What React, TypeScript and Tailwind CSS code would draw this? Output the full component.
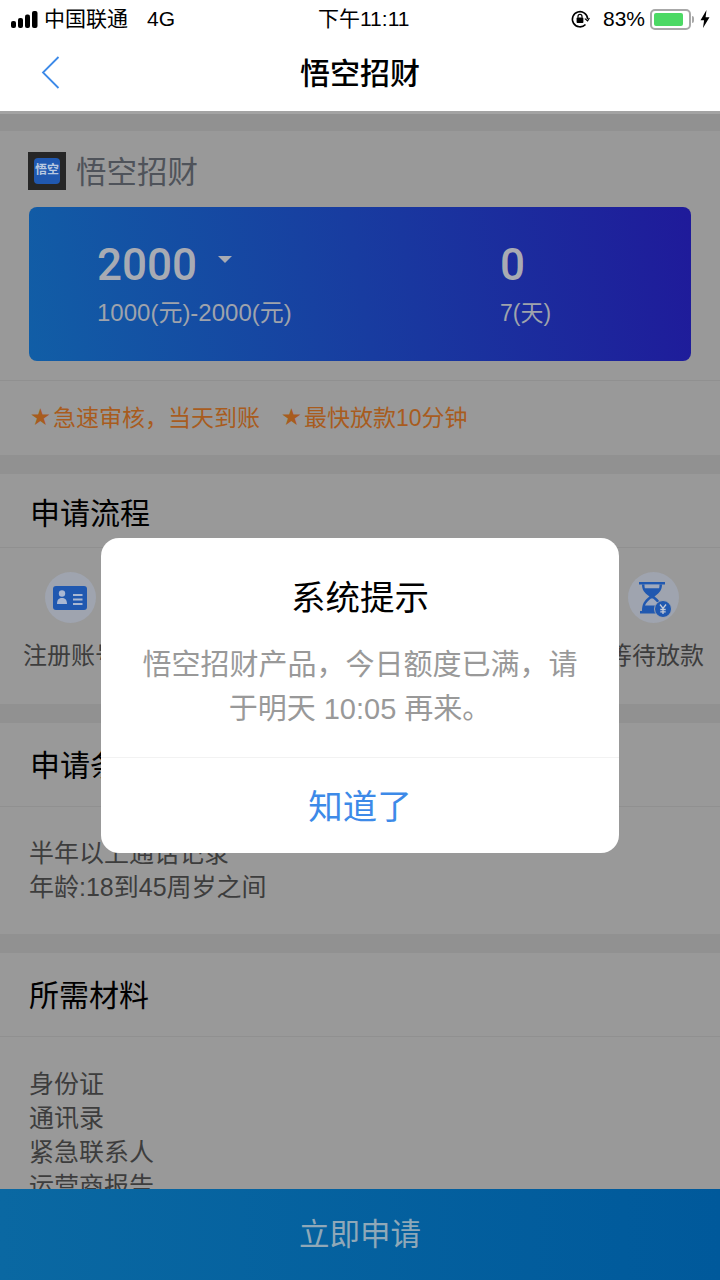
import React from 'react';

const font = { fontFamily: '"Liberation Sans", "Noto Sans CJK SC", sans-serif' };

const StatusBar: React.FC = () => (
  <div className="h-[38px] flex items-center justify-between pl-[11px] pr-[10px] text-black text-[20px] relative">
    <div className="flex items-center">
      <svg width="27" height="17" viewBox="0 0 27 17" fill="#000">
        <rect x="0" y="10" width="5" height="7" rx="2" />
        <rect x="7" y="7" width="5" height="10" rx="2" />
        <rect x="14" y="3.5" width="5" height="13.5" rx="2" />
        <rect x="21" y="0" width="5.5" height="17" rx="2" />
      </svg>
      <span className="ml-[6px] text-[21px]">中国联通</span>
      <span className="ml-[19px] text-[21px]">4G</span>
    </div>
    <div className="absolute left-[318px] top-[7px] text-[21px] leading-[24px]">下午11:11</div>
    <div className="flex items-center">
      <svg width="20" height="20" viewBox="0 0 20 20" fill="none" stroke="#000" strokeWidth="1.6">
        <path d="M15.5 15.5A7.6 7.6 0 1 1 17.6 10" />
        <path d="M14.8 9.6l2.8 2.2 1.8-2.8" strokeWidth="1.2" />
        <rect x="6.6" y="8.6" width="6.8" height="5.4" rx="0.8" fill="#000" stroke="none" />
        <path d="M8 8.8V7.4a2 2 0 0 1 4 0v1.4" strokeWidth="1.2" />
      </svg>
      <span className="ml-[13px] text-[21px]">83%</span>
      <div className="ml-[5px] w-[41px] h-[21px] rounded-[5px] border-2 border-[#a8a8a8] p-[2px]">
        <div className="h-full w-[29px] rounded-[2px] bg-[#4cd964]" />
      </div>
      <div className="ml-[1px] w-[2px] h-[7px] bg-[#a8a8a8] rounded-r-sm" />
      <svg className="ml-[6px]" width="10" height="18" viewBox="0 0 10 18" fill="#000">
        <path d="M6.5 0L0.5 10.2h3.6L3 18l6.5-10.8H5.6z" />
      </svg>
    </div>
  </div>
);

const SectionTitle: React.FC<{ title: string; className: string }> = ({ title, className }) => (
  <div className={`flex items-center border-b border-[#909090] text-[30px] text-black ${className}`}>{title}</div>
);

const CardIcon: React.FC = () => (
  <div className="w-[51px] h-[51px] mr-[2px] rounded-full bg-[#9fa4af] flex items-center justify-center">
    <svg width="34" height="24" viewBox="0 0 34 24">
      <rect width="34" height="24" rx="3" fill="#2058b0" />
      <circle cx="9" cy="7.500" r="3.200" fill="#a9b7d2" />
      <path d="M4 18c0-4.500 2.200-6 5-6s5 1.500 5 6z" fill="#a9b7d2" />
      <path d="M20 9h9.500M20 13.500h9.500M20 18h9.500" stroke="#a9b7d2" strokeWidth="1.800" />
    </svg>
  </div>
);

const HourglassIcon: React.FC = () => (
  <svg className="mr-[6px]" width="51" height="51" viewBox="0 0 51 51">
    <circle cx="25.500" cy="25.500" r="25.500" fill="#9fa4af" />
    <path d="M11 10h26v2.400H11zM12 39h21v2.400H12z" fill="#2058b0" />
    <path d="M14 12.400h20c0 5-2 8-7.500 12.100 5.500 4 7.500 8 7.500 14.500H14c0-6.500 2-10.500 7.500-14.500C16 20.400 14 17.400 14 12.400z" fill="#2058b0" />
    <path d="M16.500 12.400h15c0 1 0 2.600-.4 3.800H16.900c-.4-1.200-.4-2.800-.4-3.800zM23 26.500h2c2.500 2 5 4 6 7H17c1-3 3.500-5 6-7z" fill="#9fa9bd" />
    <circle cx="35" cy="37" r="8.500" fill="#2058b0" stroke="#9fa4af" strokeWidth="1" />
    <path d="M32 32.500l3 4 3-4M35 36.500V42M32.300 37.500h5.400M32.300 39.800h5.400" stroke="#c4cad8" strokeWidth="1.300" fill="none" />
  </svg>
);

export default function App() {
  return (
    <div className="relative w-[720px] h-[1280px] overflow-hidden bg-[#919191]" style={font}>
      {/* Header */}
      <header className="bg-white h-[111px]">
        <StatusBar />
        <div className="relative h-[73px] pb-[2px] flex items-center justify-center">
          <svg className="absolute left-[41px] top-[18px]" width="20" height="33" viewBox="0 0 20 33" fill="none" stroke="#3d8ae8" strokeWidth="1.800">
            <path d="M17.500 1L2 16.500 17.500 32" />
          </svg>
          <h1 className="text-[30px] font-medium text-black">悟空招财</h1>
        </div>
      </header>
      <div className="h-[3px] bg-[#a3a3a3]" />

      <main className="pt-[17px] flex flex-col gap-[19px]">
        {/* Product */}
        <section className="bg-[#999999] h-[324px]">
          <div className="h-[76px] pl-[28px] pt-[21px] flex items-start">
            <div className="w-[38px] h-[38px] bg-[#262626] flex items-center justify-center">
              <div className="w-[26px] h-[26px] rounded-[4px] bg-[#2058b0] text-[#b8c8e0] text-[12px] leading-[24px] text-center font-bold">悟空</div>
            </div>
            <span className="ml-[10px] text-[30.5px] leading-[40px] text-[#4f535a]">悟空招财</span>
          </div>
          <div className="mx-[29px] h-[154px] rounded-[8px] bg-linear-[80deg,#115ea6,#1f1a9a] flex text-[#a8abb3]">
            <div className="w-[471px] pl-[68px] pt-[32px]">
              <div className="flex items-center h-[52px]">
                <span className="text-[44px] font-medium leading-[52px]" style={{ fontFamily: 'Roboto, sans-serif' }}>2000</span>
                <span className="ml-[21px] mb-[12px] w-0 h-0 border-x-[7px] border-x-transparent border-t-[7px] border-t-[#a8abb3]" />
              </div>
              <div className="text-[24px] leading-[30px] text-[#9fa3ac] mt-[7px]">1000(元)-2000(元)</div>
            </div>
            <div className="pt-[32px]">
              <div className="text-[44px] font-medium leading-[52px]" style={{ fontFamily: 'Roboto, sans-serif' }}>0</div>
              <div className="text-[23px] leading-[30px] text-[#9fa3ac] mt-[7px]">7(天)</div>
            </div>
          </div>
          <div className="mt-[19px] border-t border-[#909090] h-[74px] flex items-center pl-[31px] pt-[2px] text-[23px] text-[#a85c1e]">
            <span className="text-[19px]">★</span>
            <span className="ml-[3px]">急速审核，当天到账</span>
            <span className="ml-[22px] text-[19px]">★</span>
            <span className="ml-[3px]">最快放款10分钟</span>
          </div>
        </section>

        {/* Steps */}
        <section className="bg-[#999999] h-[230px]">
          <SectionTitle title="申请流程" className="h-[74px] pl-[30px] pt-[6px]" />
          <div className="flex justify-between pl-[23px] pr-[16px] pt-[24px]">
            <div className="flex flex-col items-center gap-[15px]">
              <CardIcon />
              <span className="text-[24px] leading-[36px] text-[#3d3d3d]">注册账号</span>
            </div>
            <div className="flex flex-col items-center gap-[15px]">
              <HourglassIcon />
              <span className="text-[24px] leading-[36px] text-[#3d3d3d]">等待放款</span>
            </div>
          </div>
        </section>

        {/* Conditions */}
        <section className="bg-[#999999] h-[211px]">
          <SectionTitle title="申请条件" className="h-[84px] pl-[30px] pt-[2px]" />
          <div className="pl-[29px] pt-[29px] text-[25px] leading-[34px] text-[#3d3d3d]">
            <div>半年以上通话记录</div>
            <div>年龄:18到45周岁之间</div>
          </div>
        </section>

        {/* Materials */}
        <section className="bg-[#999999] h-[327px]">
          <SectionTitle title="所需材料" className="h-[84px] pl-[29px] pt-[2px]" />
          <div className="pl-[29px] pt-[30px] text-[25px] leading-[34px] text-[#3d3d3d]">
            <div>身份证</div>
            <div>通讯录</div>
            <div>紧急联系人</div>
            <div>运营商报告</div>
          </div>
        </section>
      </main>

      {/* Bottom button */}
      <div className="absolute bottom-0 left-0 right-0 h-[91px] flex items-center justify-center bg-linear-to-r from-[#0a68a2] to-[#00599b] text-[30.5px] text-[#8fa8b8]">
        立即申请
      </div>

      {/* Dialog */}
      <div className="absolute left-[101px] top-[538px] w-[518px] h-[315px] bg-white rounded-[18px] flex flex-col">
        <div className="pt-[37px] text-center text-[34.5px] leading-[46px] text-black">系统提示</div>
        <div className="mt-[22px] px-[40px] text-center text-[29px] leading-[44px] text-[#999999]">
          悟空招财产品，今日额度已满，请于明天 10:05 再来。
        </div>
        <div className="mt-auto h-[96px] pt-[4px] border-t border-[#f2f2f2] flex items-center justify-center text-[34.5px] text-[#3d8ae8]">
          知道了
        </div>
      </div>
    </div>
  );
}
